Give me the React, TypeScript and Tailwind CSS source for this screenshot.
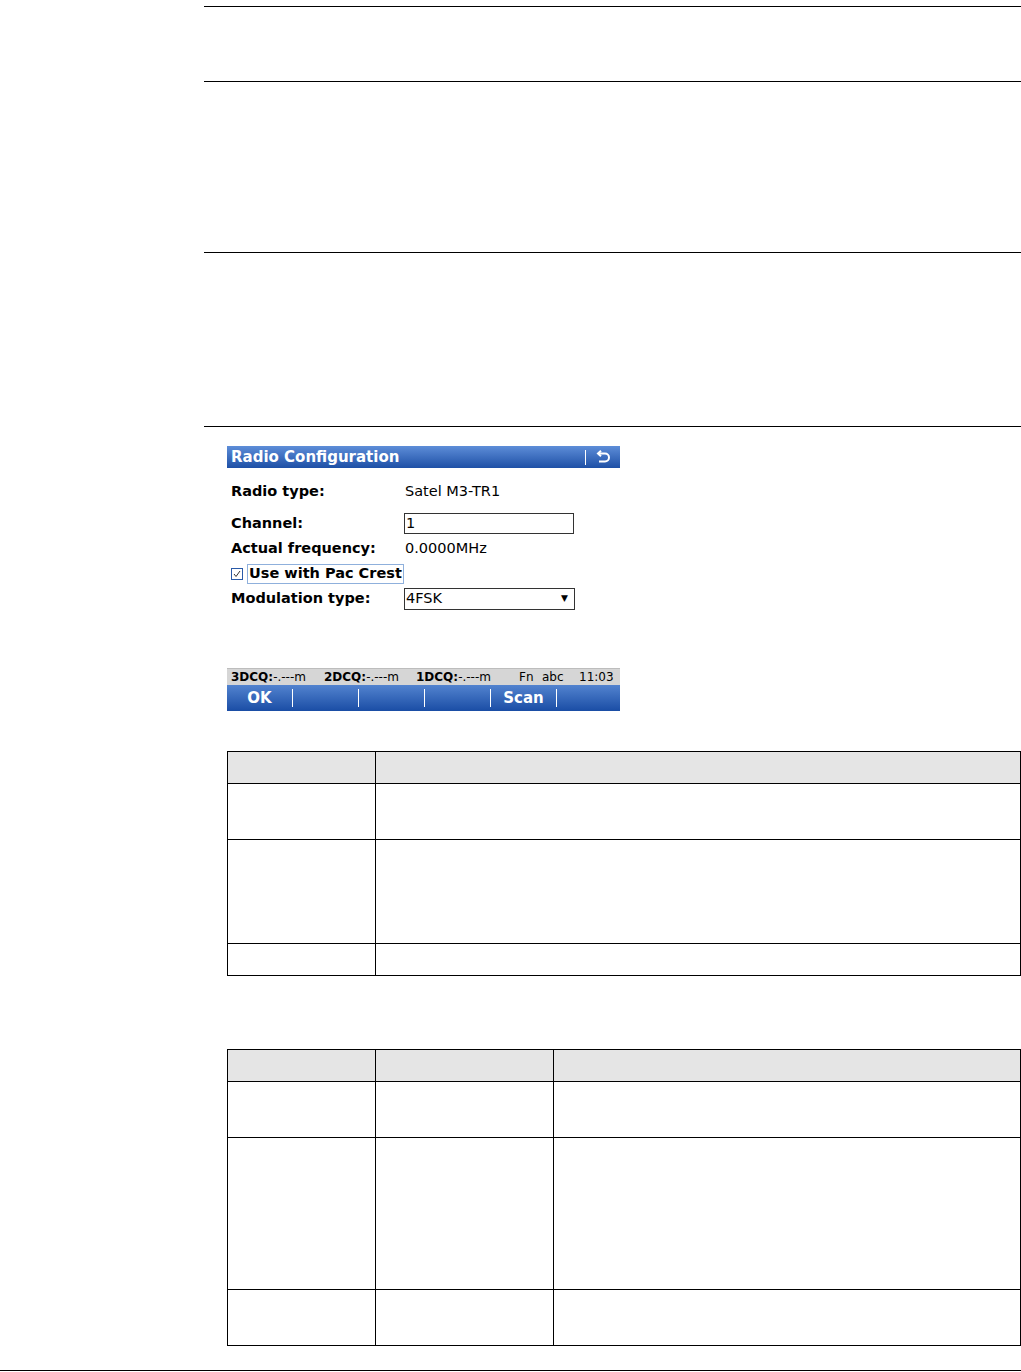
import React from 'react';

const ui = { fontFamily: '"DejaVu Sans", Verdana, sans-serif' };

function ReturnIcon() {
  return (
    <svg width="17" height="14" viewBox="0 0 17 14" fill="none" stroke="white" strokeWidth="2">
      <path d="M3 3.5 H10 A4 4 0 0 1 10 11.5 H4" />
      <path d="M6 0.8 L3 3.5 L6 6.2" />
    </svg>
  );
}

function RadioScreen() {
  return (
    <div className="w-[393px] ml-[227px] bg-white text-[14.5px] text-black" style={ui}>
      {/* Title bar */}
      <div className="h-[22px] flex items-center bg-gradient-to-b from-[#5d8dd8] to-[#1e50a6] text-white">
        <span className="pl-[4px] pt-[1px] font-bold text-[15px] leading-none flex-1">Radio Configuration</span>
        <div className="w-px h-[15px] bg-white mr-[9px]" />
        <div className="mr-[8px] flex items-center">
          <ReturnIcon />
        </div>
      </div>

      {/* Body */}
      <div className="h-[200px] pt-[11px]">
        <div className="h-[25px] flex items-center">
          <span className="w-[177px] pl-[4px] font-bold">Radio type:</span>
          <span className="pl-[1px]">Satel M3-TR1</span>
        </div>
        <div className="h-[25px] flex items-center mt-[7px]">
          <span className="w-[177px] pl-[4px] font-bold">Channel:</span>
          <div className="w-[170px] h-[21px] border border-[#333] flex items-center pl-[1px] leading-none">1</div>
        </div>
        <div className="h-[25px] flex items-center">
          <span className="w-[177px] pl-[4px] font-bold">Actual frequency:</span>
          <span className="pl-[1px]">0.0000MHz</span>
        </div>
        <div className="h-[25px] flex items-center">
          <div className="ml-[4px] w-[12px] h-[12px] border border-[#2a5aa8] flex items-center justify-center">
            <svg width="8" height="8" viewBox="0 0 8 8" fill="none" stroke="#333" strokeWidth="1">
              <path d="M1 4 L3 6.5 L7 1" />
            </svg>
          </div>
          <div className="ml-[4px] h-[20px] border border-[#8fb0dc] flex items-center px-[1px] font-bold leading-none">
            Use with Pac Crest
          </div>
        </div>
        <div className="h-[25px] flex items-center">
          <span className="w-[177px] pl-[4px] font-bold">Modulation type:</span>
          <div className="w-[171px] h-[22px] border border-[#333] flex items-center pl-[1px] pr-[6px] leading-none">
            <span className="flex-1">4FSK</span>
            <span className="text-[9px]">▼</span>
          </div>
        </div>
      </div>

      {/* Status bar */}
      <div className="h-[17px] flex items-center bg-[#d6d6d6] border-t border-[#bdbdbd] text-[12px] leading-none pl-[4px]">
        <span className="w-[93px]"><b>3DCQ:</b>-.---m</span>
        <span className="w-[92px]"><b>2DCQ:</b>-.---m</span>
        <span className="w-[103px]"><b>1DCQ:</b>-.---m</span>
        <span className="w-[23px]">Fn</span>
        <span className="w-[37px]">abc</span>
        <span>11:03</span>
      </div>

      {/* Softkeys */}
      <div className="h-[26px] flex items-center bg-gradient-to-b from-[#5283cf] to-[#1a4da5] text-white font-bold text-[15px]">
        <span className="w-[65px] text-center">OK</span>
        <div className="w-px h-[18px] bg-white" />
        <span className="w-[65px]" />
        <div className="w-px h-[18px] bg-white" />
        <span className="w-[65px]" />
        <div className="w-px h-[18px] bg-white" />
        <span className="w-[65px]" />
        <div className="w-px h-[18px] bg-white" />
        <span className="w-[65px] text-center">Scan</span>
        <div className="w-px h-[18px] bg-white" />
        <span className="flex-1" />
      </div>
    </div>
  );
}

function Grid({ cols, rows }: { cols: number[]; rows: number[] }) {
  return (
    <table className="ml-[227px] border-collapse table-fixed w-[793px]">
      <colgroup>
        {cols.map((w, i) => (
          <col key={i} style={{ width: w }} />
        ))}
      </colgroup>
      <tbody>
        {rows.map((h, r) => (
          <tr key={r} style={{ height: h }}>
            {cols.map((_, c) => (
              <td
                key={c}
                className={`border border-black p-0 ${r === 0 ? 'bg-[#e5e5e5]' : 'bg-white'}`}
              />
            ))}
          </tr>
        ))}
      </tbody>
    </table>
  );
}

export default function App() {
  return (
    <div className="w-[1021px] h-[1372px] bg-white flex flex-col overflow-hidden">
      <div className="mt-[6px] ml-[204px] h-px bg-black" />
      <div className="mt-[74px] ml-[204px] h-px bg-black" />
      <div className="mt-[170px] ml-[204px] h-px bg-black" />
      <div className="mt-[173px] ml-[204px] h-px bg-black" />

      <div className="mt-[19px]">
        <RadioScreen />
      </div>

      <div className="mt-[40px]">
        <Grid cols={[148, 645]} rows={[32, 56, 104, 32]} />
      </div>

      <div className="mt-[73px]">
        <Grid cols={[148, 178, 467]} rows={[32, 56, 152, 56]} />
      </div>

      <div className="mt-auto mb-[1px] h-px bg-black" />
    </div>
  );
}
